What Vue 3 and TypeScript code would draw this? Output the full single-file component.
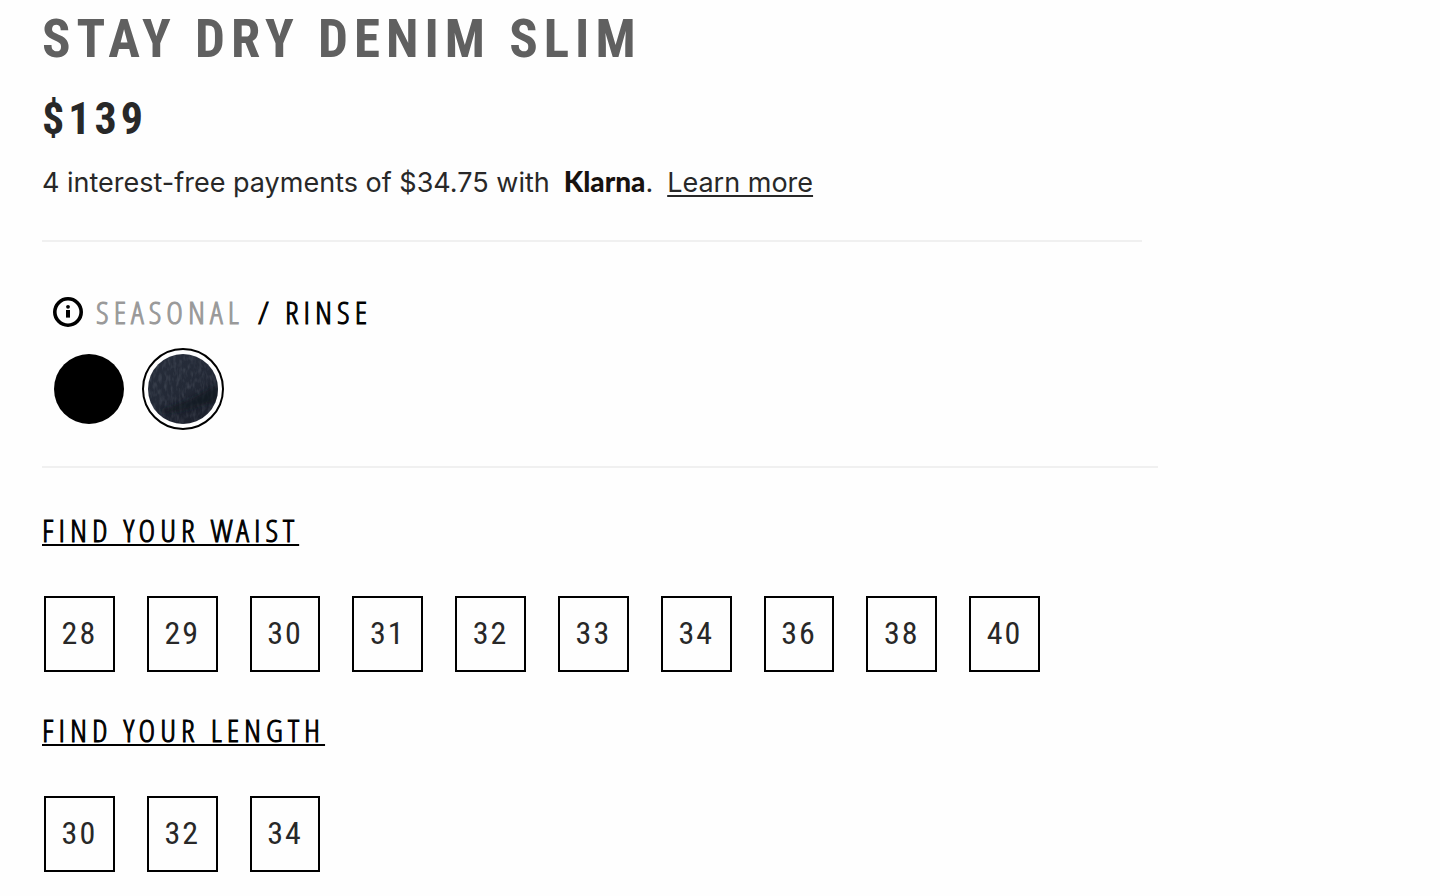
<script setup lang="ts">
import { ref } from 'vue'

interface Swatch {
  name: string
  kind: 'solid' | 'denim'
}

const swatches: Swatch[] = [
  { name: 'Black', kind: 'solid' },
  { name: 'Rinse', kind: 'denim' },
]
const waists: number[] = [28, 29, 30, 31, 32, 33, 34, 36, 38, 40]
const lengths: number[] = [30, 32, 34]

const colour = ref<string>('Rinse')
const waist = ref<number | null>(null)
const inseam = ref<number | null>(null)
</script>

<template>
  <main class="product">
    <header class="summary">
      <h1 class="title">STAY DRY DENIM SLIM</h1>
      <p class="price">$139</p>
      <p class="payments">
        <span>4 interest-free payments of $34.75 with</span>
        <span class="brand">Klarna</span><span>.</span>
        <a class="more" href="#klarna">Learn more</a>
      </p>
    </header>

    <section class="colours" aria-label="Colour">
      <div class="colour-name">
        <svg class="info" viewBox="0 0 32 32" aria-hidden="true">
          <circle cx="16" cy="16" r="13.2" fill="none" stroke="#000" stroke-width="3.6" />
          <circle cx="16" cy="10.8" r="1.9" />
          <rect x="14" y="14" width="4" height="7.6" />
        </svg>
        <span class="season">SEASONAL</span>
        <span>/ RINSE</span>
      </div>
      <div class="swatches">
        <button
          v-for="s in swatches"
          :key="s.name"
          type="button"
          class="swatch"
          :class="{ selected: colour === s.name }"
          :aria-label="s.name"
          :aria-pressed="colour === s.name"
          @click="colour = s.name"
        >
          <svg class="disc" viewBox="0 0 70 70" aria-hidden="true">
            <circle v-if="s.kind === 'solid'" cx="35" cy="35" r="35" />
            <template v-else>
              <defs>
                <linearGradient id="denim-base" x1="0" y1="0" x2="0.6" y2="1">
                  <stop offset="0" stop-color="#272e3b" />
                  <stop offset="0.6" stop-color="#232936" />
                  <stop offset="1" stop-color="#1c202c" />
                </linearGradient>
                <clipPath id="disc-clip"><circle cx="35" cy="35" r="35" /></clipPath>
                <filter id="weave" x="0" y="0" width="1" height="1">
                  <feTurbulence type="fractalNoise" baseFrequency="0.35 0.14" numOctaves="2" seed="4" />
                  <feColorMatrix values="0 0 0 0 0.32  0 0 0 0 0.35  0 0 0 0 0.41  0.8 0 0 0 -0.33" />
                </filter>
                <filter id="fold" x="-0.2" y="-0.4" width="1.4" height="1.8">
                  <feGaussianBlur stdDeviation="2.5" />
                </filter>
              </defs>
              <g clip-path="url(#disc-clip)">
                <rect width="70" height="70" fill="url(#denim-base)" />
                <rect width="70" height="70" filter="url(#weave)" opacity="0.55" />
                <path d="M14 55 Q42 48 72 28 L72 46 Q50 54 14 61Z" fill="#10131c" opacity="0.6" filter="url(#fold)" />
              </g>
            </template>
          </svg>
        </button>
      </div>
    </section>

    <section class="sizes">
      <h2 class="heading"><a href="#waist">FIND YOUR WAIST</a></h2>
      <div class="options">
        <button
          v-for="n in waists"
          :key="n"
          type="button"
          class="size"
          :aria-pressed="waist === n"
          @click="waist = n"
        >{{ n }}</button>
      </div>
      <h2 class="heading"><a href="#length">FIND YOUR LENGTH</a></h2>
      <div class="options">
        <button
          v-for="n in lengths"
          :key="n"
          type="button"
          class="size"
          :aria-pressed="inseam === n"
          @click="inseam = n"
        >{{ n }}</button>
      </div>
    </section>
  </main>
</template>

<style>
body {
  background: #fefefe;
}
</style>

<style scoped>
.product {
  max-width: 1116px;
  padding: 9px 42px 0;
  color: #000;
  font-family: "Roboto Condensed", Roboto, sans-serif;
}
.summary {
  max-width: 1100px;
  border-bottom: 2px solid #f0f0f0;
  padding-bottom: 39px;
}
.title {
  margin: 0;
  font-size: 53px;
  line-height: 60px;
  letter-spacing: 6px;
  color: #606060;
}
.price {
  margin: 24px 0 0;
  font-size: 44px;
  font-weight: 700;
  line-height: 52px;
  letter-spacing: 4px;
  color: #282828;
}
.payments {
  display: flex;
  align-items: baseline;
  margin: 18px 0 0;
  font-family: Inter, sans-serif;
  font-size: 27px;
  line-height: 36px;
  color: #282828;
}
.brand {
  margin-left: 14px;
  font-family: Lato, sans-serif;
  font-size: 28px;
  font-weight: 900;
  color: #17120f;
}
.more {
  margin-left: 14px;
  color: inherit;
  text-decoration-thickness: 2px;
  text-underline-offset: 3px;
}
.colours {
  border-bottom: 2px solid #f0f0f0;
  padding: 50px 0 36px 10px;
}
.colour-name,
.heading {
  font-family: "Open Sans Condensed Light", "Open Sans Condensed", "Roboto Condensed", sans-serif;
  font-size: 32px;
  font-weight: 400;
  letter-spacing: 5px;
  -webkit-text-stroke: 1px currentColor;
}
.colour-name {
  display: flex;
  align-items: center;
  line-height: 40px;
}
.info {
  width: 32px;
  height: 32px;
  margin-right: 12px;
}
.season {
  margin-right: 14px;
  color: #999;
}
.swatches {
  display: flex;
  gap: 12px;
  margin-top: 16px;
  margin-left: -4px;
}
.swatch {
  box-sizing: border-box;
  width: 82px;
  height: 82px;
  padding: 4px;
  border: 2px solid transparent;
  border-radius: 50%;
  background: none;
}
.swatch.selected {
  border-color: #000;
}
.disc {
  display: block;
  width: 70px;
  height: 70px;
}
.sizes {
  padding-top: 42px;
}
.heading {
  margin: 0;
  line-height: 40px;
}
.heading a {
  color: inherit;
  text-decoration-thickness: 2px;
  text-underline-offset: 2px;
  text-decoration-skip-ink: none;
}
.options {
  display: grid;
  grid-template-columns: repeat(10, minmax(0, 1fr));
  column-gap: 32px;
  max-width: 996px;
  margin: 46px 2px 38px;
}
.size {
  height: 76px;
  padding: 0 0 2px;
  border: 2px solid #000;
  background: none;
  color: #282828;
  font-family: inherit;
  font-size: 32px;
  letter-spacing: 2px;
}
</style>
